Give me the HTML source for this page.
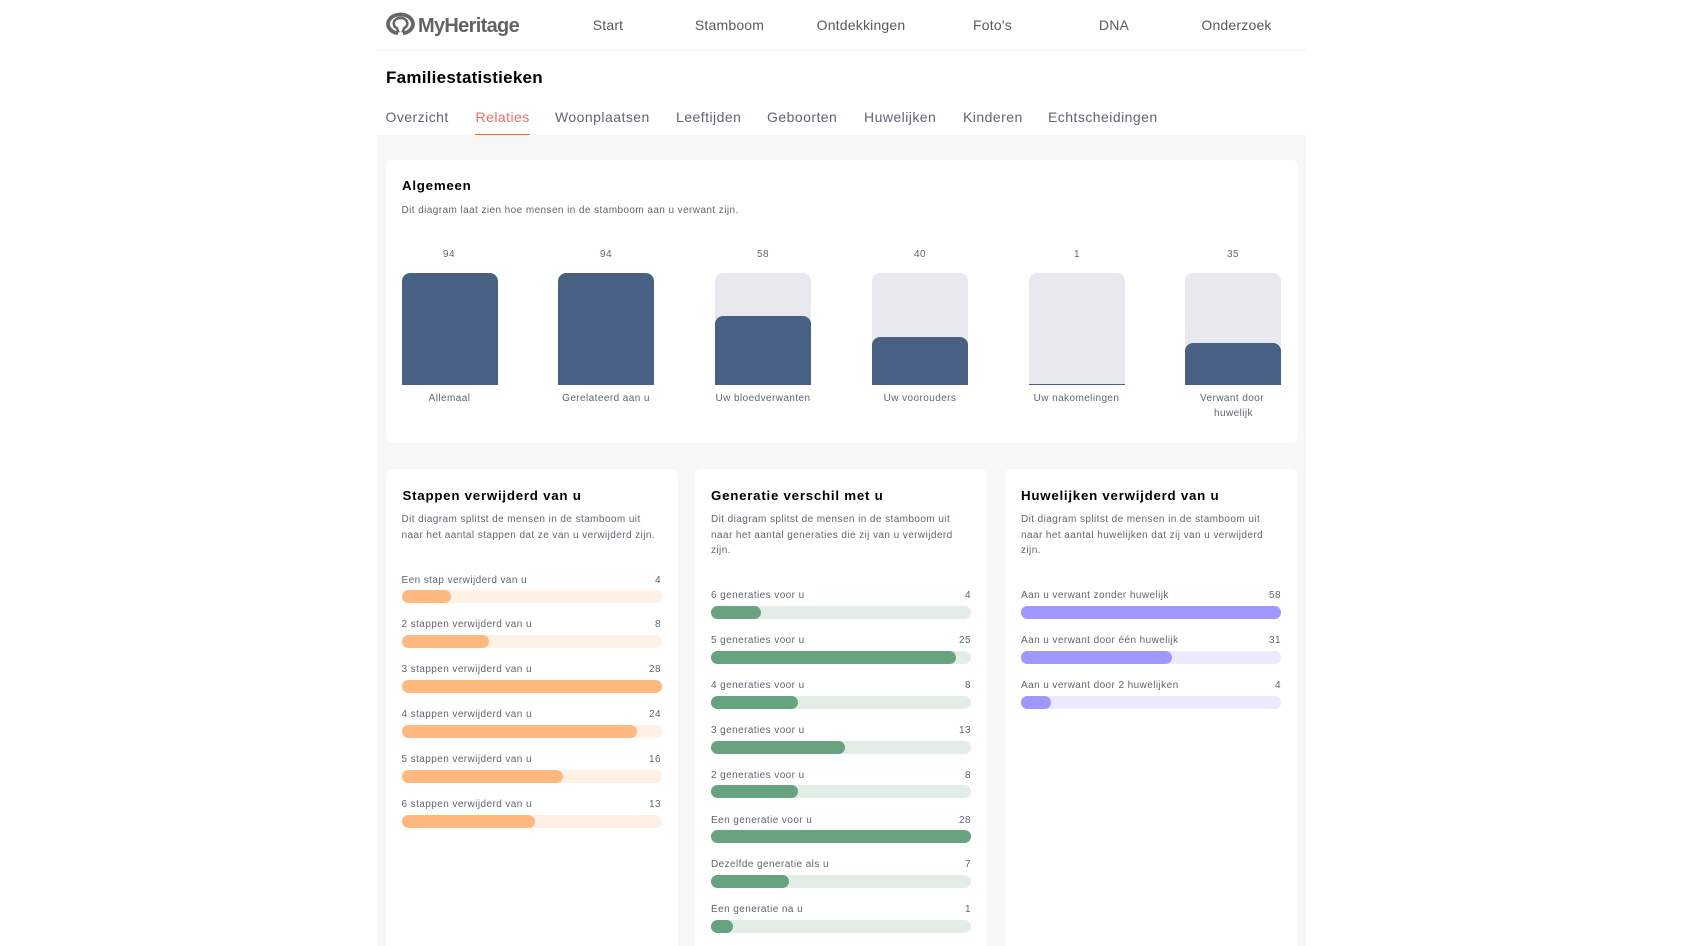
<!DOCTYPE html>
<html><head><meta charset="utf-8"><title>Familiestatistieken</title>
<style>
html,body{margin:0;padding:0;background:#fff;width:1682px;height:946px;overflow:hidden}
body{position:relative;font-family:"Liberation Sans",sans-serif}
div,span{position:absolute;white-space:nowrap}
#page{left:377px;top:0;width:929px;height:946px;background:#fff}
#gray{left:377px;top:135px;width:929px;height:811px;background:#f7f7f7}
#sh{left:377px;top:48px;width:929px;height:3px;background:linear-gradient(#fff,#f5f5f5)}
.n{top:16px;line-height:18px;font-size:14px;color:#5a5a5a;letter-spacing:.2px;transform:translateX(-50%)}
.t{top:108px;line-height:18px;font-size:14px;color:#5c6773;letter-spacing:.46px}
.card{background:#fff;border-radius:6px}
.h{font-weight:700;font-size:13.3px;line-height:18px;color:#000;letter-spacing:.75px;margin-top:1px}
.d,.l,.v{font-size:10px;line-height:16px;color:#5f6670;letter-spacing:.42px;margin-top:1px;margin-left:-.5px}
.v{text-align:right;width:60px;margin-left:-1px}
.c{transform:translateX(-50%);text-align:center}
.bb{background:#e7e9ee;border-radius:8px 8px 0 0;width:96px;height:112px;top:273px;overflow:hidden}
.bf{background:#486083;border-radius:8px 8px 0 0;left:0;bottom:0;width:96px}
.tr{height:13px;width:260px;border-radius:7px}
.fi{left:0;top:0;height:13px;border-radius:7px}
.o{background:#fff0e6}.o .fi{background:#ffb97f}
.g{background:#e2ede6}.g .fi{background:#67a37f}
.p{background:#ebe9fe}.p .fi{background:#9d97fe}
</style></head><body>
<div id="page"></div><div id="gray"></div><div id="sh"></div>

<svg style="position:absolute;left:385px;top:11px" width="32" height="26" viewBox="0 0 32 26">
<path d="M13 22.300A12.500 9.500 0 1 1 18 22.300" fill="none" stroke="#666" stroke-width="3.800"/>
<path d="M13.500 21.500L12 17.300A6.800 5.600 0 1 1 19 17.300L17.500 21.500" fill="none" stroke="#666" stroke-width="2.600"/>
</svg>
<span style="left:418px;top:14px;font-size:20px;line-height:24px;font-weight:700;color:#636363;letter-spacing:-.68px">MyHeritage</span>

<span class="n" style="left:608px">Start</span>
<span class="n" style="left:729.500px">Stamboom</span>
<span class="n" style="left:861px">Ontdekkingen</span>
<span class="n" style="left:992.500px">Foto's</span>
<span class="n" style="left:1114px">DNA</span>
<span class="n" style="left:1236.500px">Onderzoek</span>

<span style="left:386px;top:67px;font-size:17px;line-height:22px;font-weight:700;color:#000;letter-spacing:.25px">Familiestatistieken</span>

<span class="t" style="left:385.500px">Overzicht</span>
<span class="t" style="left:475.500px;color:#f0705f">Relaties</span>
<div style="left:475px;top:134px;width:55px;height:1px;background:#ff6a3c"></div>
<span class="t" style="left:555px">Woonplaatsen</span>
<span class="t" style="left:676px">Leeftijden</span>
<span class="t" style="left:767px">Geboorten</span>
<span class="t" style="left:864px">Huwelijken</span>
<span class="t" style="left:963px">Kinderen</span>
<span class="t" style="left:1048px">Echtscheidingen</span>

<div class="card" style="left:386px;top:160px;width:912px;height:283px"></div>
<span class="h" style="left:402px;top:176px">Algemeen</span>
<span class="d" style="left:402px;top:202px">Dit diagram laat zien hoe mensen in de stamboom aan u verwant zijn.</span>

<span class="v c" style="left:450px;top:246px">94</span>
<span class="v c" style="left:607px;top:246px">94</span>
<span class="v c" style="left:764px;top:246px">58</span>
<span class="v c" style="left:921px;top:246px">40</span>
<span class="v c" style="left:1078px;top:246px">1</span>
<span class="v c" style="left:1234px;top:246px">35</span>

<div class="bb" style="left:402px"><div class="bf" style="height:112px"></div></div>
<div class="bb" style="left:558px"><div class="bf" style="height:112px"></div></div>
<div class="bb" style="left:715px"><div class="bf" style="height:69px"></div></div>
<div class="bb" style="left:872px"><div class="bf" style="height:48px"></div></div>
<div class="bb" style="left:1029px"><div class="bf" style="height:1.200px;border-radius:0"></div></div>
<div class="bb" style="left:1185px"><div class="bf" style="height:42px"></div></div>

<span class="l c" style="left:450px;top:390px">Allemaal</span>
<span class="l c" style="left:606.500px;top:390px">Gerelateerd aan u</span>
<span class="l c" style="left:763.500px;top:390px">Uw bloedverwanten</span>
<span class="l c" style="left:920.500px;top:390px">Uw voorouders</span>
<span class="l c" style="left:1077px;top:390px">Uw nakomelingen</span>
<span class="l c" style="left:1232.500px;top:390px">Verwant door</span>
<span class="l c" style="left:1234px;top:405px">huwelijk</span>

<div class="card" style="left:386px;top:469px;width:292px;height:500px"></div>
<div class="card" style="left:695px;top:469px;width:292px;height:500px"></div>
<div class="card" style="left:1005px;top:469px;width:292px;height:500px"></div>

<span class="h" style="left:402.500px;top:486px">Stappen verwijderd van u</span>
<span class="d" style="left:402px;top:511px">Dit diagram splitst de mensen in de stamboom uit</span>
<span class="d" style="left:402px;top:527px">naar het aantal stappen dat ze van u verwijderd zijn.</span>

<span class="l" style="left:402px;top:572px">Een stap verwijderd van u</span><span class="v" style="left:602px;top:572px">4</span>
<div class="tr o" style="left:402px;top:590px"><div class="fi" style="width:49px"></div></div>
<span class="l" style="left:402px;top:616px">2 stappen verwijderd van u</span><span class="v" style="left:602px;top:616px">8</span>
<div class="tr o" style="left:402px;top:635px"><div class="fi" style="width:87px"></div></div>
<span class="l" style="left:402px;top:661px">3 stappen verwijderd van u</span><span class="v" style="left:602px;top:661px">28</span>
<div class="tr o" style="left:402px;top:680px"><div class="fi" style="width:260px"></div></div>
<span class="l" style="left:402px;top:706px">4 stappen verwijderd van u</span><span class="v" style="left:602px;top:706px">24</span>
<div class="tr o" style="left:402px;top:725px"><div class="fi" style="width:235px"></div></div>
<span class="l" style="left:402px;top:751px">5 stappen verwijderd van u</span><span class="v" style="left:602px;top:751px">16</span>
<div class="tr o" style="left:402px;top:770px"><div class="fi" style="width:161px"></div></div>
<span class="l" style="left:402px;top:796px">6 stappen verwijderd van u</span><span class="v" style="left:602px;top:796px">13</span>
<div class="tr o" style="left:402px;top:815px"><div class="fi" style="width:133px"></div></div>

<span class="h" style="left:711px;top:486px">Generatie verschil met u</span>
<span class="d" style="left:711.500px;top:511px">Dit diagram splitst de mensen in de stamboom uit</span>
<span class="d" style="left:711.500px;top:527px">naar het aantal generaties die zij van u verwijderd</span>
<span class="d" style="left:711.500px;top:542px">zijn.</span>

<span class="l" style="left:711.500px;top:587px">6 generaties voor u</span><span class="v" style="left:912px;top:587px">4</span>
<div class="tr g" style="left:711px;top:606px"><div class="fi" style="width:50px"></div></div>
<span class="l" style="left:711.500px;top:632px">5 generaties voor u</span><span class="v" style="left:912px;top:632px">25</span>
<div class="tr g" style="left:711px;top:651px"><div class="fi" style="width:245px"></div></div>
<span class="l" style="left:711.500px;top:677px">4 generaties voor u</span><span class="v" style="left:912px;top:677px">8</span>
<div class="tr g" style="left:711px;top:696px"><div class="fi" style="width:87px"></div></div>
<span class="l" style="left:711.500px;top:722px">3 generaties voor u</span><span class="v" style="left:912px;top:722px">13</span>
<div class="tr g" style="left:711px;top:741px"><div class="fi" style="width:134px"></div></div>
<span class="l" style="left:711.500px;top:767px">2 generaties voor u</span><span class="v" style="left:912px;top:767px">8</span>
<div class="tr g" style="left:711px;top:785px"><div class="fi" style="width:87px"></div></div>
<span class="l" style="left:711.500px;top:812px">Een generatie voor u</span><span class="v" style="left:912px;top:812px">28</span>
<div class="tr g" style="left:711px;top:830px"><div class="fi" style="width:260px"></div></div>
<span class="l" style="left:711.500px;top:856px">Dezelfde generatie als u</span><span class="v" style="left:912px;top:856px">7</span>
<div class="tr g" style="left:711px;top:875px"><div class="fi" style="width:78px"></div></div>
<span class="l" style="left:711.500px;top:901px">Een generatie na u</span><span class="v" style="left:912px;top:901px">1</span>
<div class="tr g" style="left:711px;top:920px"><div class="fi" style="width:22px"></div></div>

<span class="h" style="left:1021px;top:486px">Huwelijken verwijderd van u</span>
<span class="d" style="left:1021.500px;top:511px">Dit diagram splitst de mensen in de stamboom uit</span>
<span class="d" style="left:1021.500px;top:527px">naar het aantal huwelijken dat zij van u verwijderd</span>
<span class="d" style="left:1021.500px;top:542px">zijn.</span>

<span class="l" style="left:1021.500px;top:587px">Aan u verwant zonder huwelijk</span><span class="v" style="left:1222px;top:587px">58</span>
<div class="tr p" style="left:1021px;top:606px"><div class="fi" style="width:260px"></div></div>
<span class="l" style="left:1021.500px;top:632px">Aan u verwant door één huwelijk</span><span class="v" style="left:1222px;top:632px">31</span>
<div class="tr p" style="left:1021px;top:651px"><div class="fi" style="width:151px"></div></div>
<span class="l" style="left:1021.500px;top:677px">Aan u verwant door 2 huwelijken</span><span class="v" style="left:1222px;top:677px">4</span>
<div class="tr p" style="left:1021px;top:696px"><div class="fi" style="width:30px"></div></div>
</body></html>
